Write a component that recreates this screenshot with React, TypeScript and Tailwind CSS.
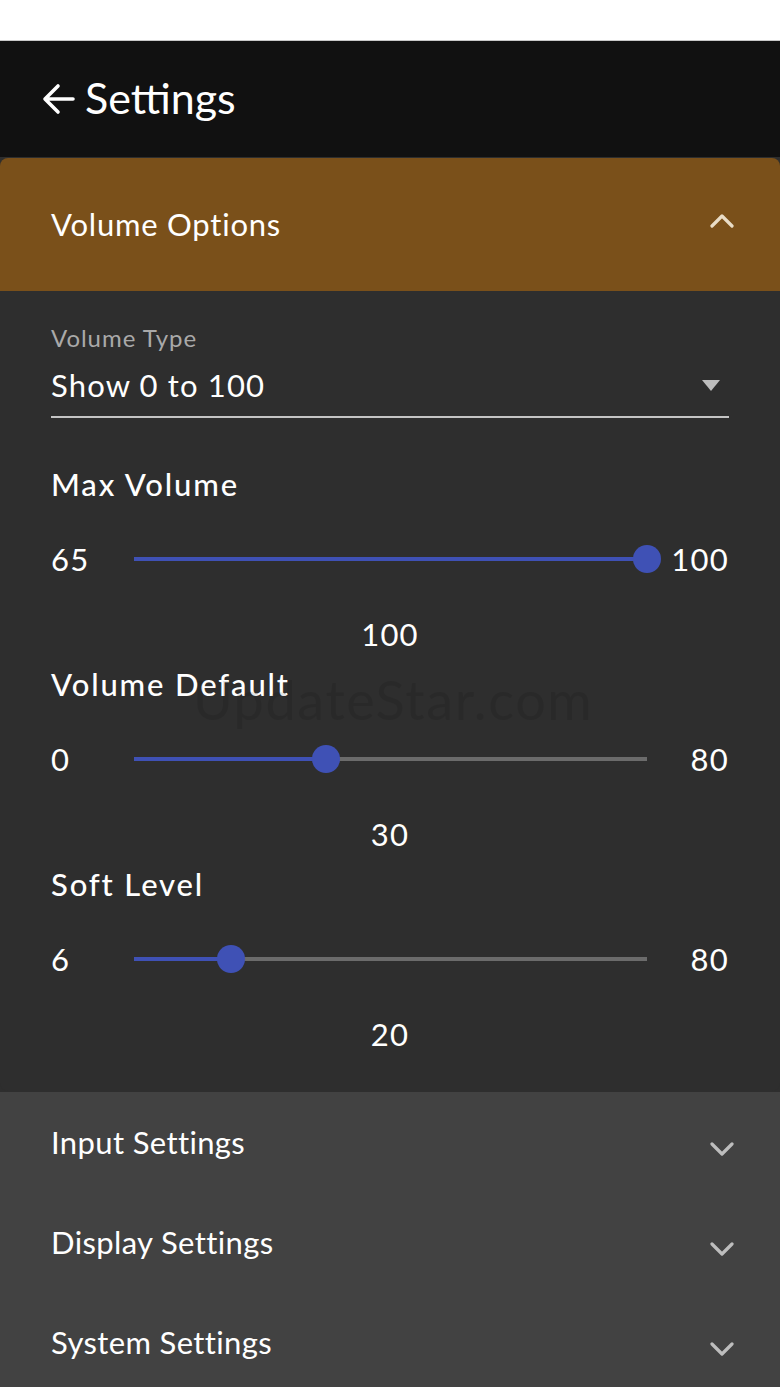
import React from "react";

type SliderProps = {
  title: string;
  min: number;
  max: number;
  value: number;
};

function Chevron({ up, className }: { up?: boolean; className?: string }) {
  return (
    <svg width="24" height="16" viewBox="0 0 24 16" className={className}>
      <polyline
        points={up ? "2,14 12,4 22,14" : "2,3 12,13 22,3"}
        fill="none"
        stroke="currentColor"
        strokeWidth="3.2"
        strokeLinecap="round"
        strokeLinejoin="round"
      />
    </svg>
  );
}

function SliderGroup({ title, min, max, value }: SliderProps) {
  const pct = ((value - min) / (max - min)) * 100;
  return (
    <div>
      <div className="flex h-[50px] items-center text-[31px] font-medium tracking-[0.06em] text-white">
        {title}
      </div>
      <div className="flex h-[100px] items-center text-[31px] tracking-[0.04em] text-white">
        <div className="w-[83px]">{min}</div>
        <div className="relative h-[4px] flex-1 bg-[#6b6b6b]">
          <div className="absolute left-0 top-0 h-full bg-[#3f51b5]" style={{ width: `${pct}%` }} />
          <div
            className="absolute top-1/2 h-[28px] w-[28px] -translate-x-1/2 -translate-y-1/2 rounded-full bg-[#3f51b5]"
            style={{ left: `${pct}%` }}
          />
        </div>
        <div className="w-[82px] text-right">{max}</div>
      </div>
      <div className="flex h-[50px] items-center justify-center text-[31px] tracking-[0.04em] text-white">
        {value}
      </div>
    </div>
  );
}

export default function App() {
  const collapsed = ["Input Settings", "Display Settings", "System Settings"];

  return (
    <div className="min-h-[1387px] bg-white font-['Lato',sans-serif]">
      <div className="h-[41px] border-b border-[#c8c8c8] bg-white" />
      <header className="flex h-[116px] items-center gap-[9px] bg-[#111111] px-[42px] text-white">
        <svg width="34" height="32" viewBox="0 0 34 32">
          <path
            d="M31 16H4M16 3L3 16l13 13"
            fill="none"
            stroke="white"
            strokeWidth="3.6"
            strokeLinecap="round"
            strokeLinejoin="round"
          />
        </svg>
        <h1 className="-mt-[4px] text-[43px] leading-none">Settings</h1>
      </header>

      <div className="bg-[#2e2e2e] pt-[1px]">
        <div className="overflow-hidden rounded-[8px] bg-[#2e2e2e]">
          <button className="flex h-[133px] w-full items-center justify-between bg-[#7a501a] pl-[51px] pr-[46px] text-left">
            <span className="text-[31px] tracking-[0.025em] text-white">Volume Options</span>
            <Chevron up className="-mt-[10px] text-[#e9dcc6]" />
          </button>

          <div className="relative px-[51px] pb-[32px] pt-[35px]">
            <div className="text-[24px] leading-[24px] tracking-[0.04em] text-[#a9a9a9]">Volume Type</div>
            <div className="flex items-center justify-between border-b-2 border-[#c4c4c4] pb-[8px] pt-[12px]">
              <span className="text-[31px] leading-[46px] tracking-[0.037em] text-white">Show 0 to 100</span>
              <svg width="18" height="11" viewBox="0 0 18 11" className="mr-[9px]">
                <polygon points="0,0 18,0 9,11" fill="#bdbdbd" />
              </svg>
            </div>

            <div className="mt-[41px]">
              <SliderGroup title="Max Volume" min={65} max={100} value={100} />
              <SliderGroup title="Volume Default" min={0} max={80} value={30} />
              <SliderGroup title="Soft Level" min={6} max={80} value={20} />
            </div>

            <div className="pointer-events-none absolute left-[193px] top-[368px] text-[54px] tracking-[0.03em] text-black/10">
              UpdateStar.com
            </div>
          </div>
        </div>

        <div className="mt-[1px] bg-[#424242]">
          {collapsed.map((label) => (
            <div key={label} className="flex h-[100px] items-center justify-between pl-[51px] pr-[46px]">
              <span className="text-[31px] tracking-[0.012em] text-white">{label}</span>
              <Chevron className="mt-[14px] text-[#bdbdbd]" />
            </div>
          ))}
        </div>
      </div>
    </div>
  );
}
